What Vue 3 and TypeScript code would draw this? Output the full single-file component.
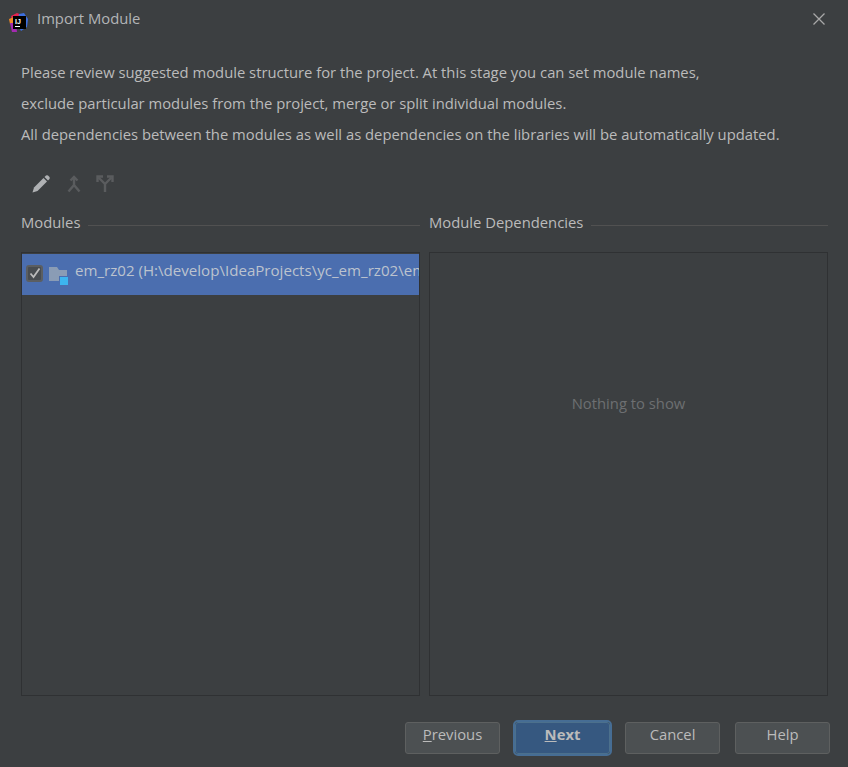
<script setup lang="ts">
const lines: string[] = [
  'Please review suggested module structure for the project. At this stage you can set module names,',
  'exclude particular modules from the project, merge or split individual modules.',
  'All dependencies between the modules as well as dependencies on the libraries will be automatically updated.',
]
</script>

<template>
  <div class="dialog">
    <header class="title">
      <svg class="logo" width="20" height="20" viewBox="0 0 20 20">
        <path d="M2 4 L8 1 L13 3 L10 7 L3 9 Z" fill="#e5234f" />
        <path d="M10 2 L15 1 L19 7 L18 15 L12 19 L8 12 Z" fill="#3d6fe0" />
        <path d="M0 7 L5 5 V13 L1 12 Z" fill="#f08a24" />
        <path d="M1 11 L7 11 L8 20 L3 20 Z" fill="#a32bb0" />
        <rect x="4" y="4" width="13" height="13" fill="#000" />
        <rect x="6" y="14" width="5" height="1" fill="#fff" />
        <text x="6" y="11.500" class="logo-text">IJ</text>
      </svg>
      <span class="title-text">Import Module</span>
      <svg class="close" width="16" height="16" viewBox="0 0 16 16">
        <path d="M2.500 2.500 L13.500 13.500 M13.500 2.500 L2.500 13.500" stroke="#a8a8a8" stroke-width="1.300" fill="none" />
      </svg>
    </header>

    <section class="intro">
      <p v-for="line in lines" :key="line">{{ line }}</p>
    </section>

    <div class="toolbar">
      <svg width="20" height="20" viewBox="0 0 20 20">
        <path d="M1.500 18.500 L3 13.500 L12.500 4 L16 7.500 L6.500 17 Z" fill="#afb1b3" />
        <path d="M13.500 3 L15 1.500 Q16 0.800 17 1.500 L18.500 3 Q19 4 18.500 5 L17 6.500 Z" fill="#afb1b3" />
      </svg>
      <svg width="20" height="20" viewBox="0 0 20 20" fill="none" stroke="#5a5c5e" stroke-width="2.400">
        <path d="M11 3 V11 L5.500 17.500 M11 11 L16.500 17.500" />
        <path d="M7.500 6.500 L11 3 L14.500 6.500" />
      </svg>
      <svg width="20" height="20" viewBox="0 0 20 20" fill="none" stroke="#5a5c5e" stroke-width="2.400">
        <path d="M10 18 V10 L3.500 3.500 M10 10 L16.500 3.500" />
        <path d="M2.500 8 V2.500 H8 M12 2.500 H17.500 V8" />
      </svg>
    </div>

    <div class="columns">
      <div class="column">
        <div class="legend"><span>Modules</span><i></i></div>
        <div class="panel">
          <div class="row">
            <span class="check">
              <svg width="12" height="12" viewBox="0 0 12 12" fill="none" stroke="#bbbbbb" stroke-width="1.800">
                <path d="M1.500 6.500 L4.500 10 L10.500 1.500" />
              </svg>
            </span>
            <svg class="folder" width="20" height="20" viewBox="0 0 20 20">
              <path d="M0 1 H8 L10 4 H18 V15 H0 Z" fill="#8a9cb5" />
              <rect x="10" y="10" width="10" height="10" fill="#4b6eaf" />
              <rect x="11" y="11" width="8" height="8" fill="#3db5ef" />
            </svg>
            <span class="row-text">em_rz02 (H:\develop\IdeaProjects\yc_em_rz02\em_rz02)</span>
          </div>
        </div>
      </div>
      <div class="column">
        <div class="legend"><span>Module Dependencies</span><i></i></div>
        <div class="panel empty">Nothing to show</div>
      </div>
    </div>

    <footer class="actions">
      <button type="button" class="btn"><u>P</u>revious</button>
      <button type="button" class="btn primary"><u>N</u>ext</button>
      <button type="button" class="btn">Cancel</button>
      <button type="button" class="btn">Help</button>
    </footer>
  </div>
</template>

<style>
html, body { margin: 0; background: #3c3f41; }
</style>

<style scoped>
.dialog {
  width: 848px;
  height: 767px;
  box-sizing: border-box;
  background: #3c3f41;
  color: #bbbbbb;
  font-family: "Open Sans", "Noto Sans", sans-serif;
  font-size: 14.800px;
  display: flex;
  flex-direction: column;
  overflow: hidden;
}
.title {
  height: 37px;
  display: flex;
  align-items: center;
  padding: 0 21px 0 9px;
  flex: none;
}
.logo { flex: none; margin-top: 7px; overflow: visible; }
.logo-text { font: bold 7px "Liberation Sans", sans-serif; fill: #fff; }
.title-text { margin: 0 0 2px 8px; color: #b3b5b7; }
.close { margin-left: auto; }
.intro { padding: 20px 21px 0; flex: none; }
.intro p { margin: 0; height: 31px; line-height: 31px; white-space: nowrap; }
.toolbar {
  margin-top: 21px;
  padding-left: 31px;
  display: flex;
  gap: 12px;
  align-items: center;
  height: 26px;
  flex: none;
}
.columns {
  margin-top: 13px;
  padding: 0 20px 0 21px;
  display: grid;
  grid-template-columns: 399px 399px;
  column-gap: 9px;
  flex: none;
}
.legend {
  height: 24px;
  display: flex;
  align-items: center;
  gap: 8px;
}
.legend i { flex: 1; height: 1px; background: #515151; margin-top: 6px; }
.panel {
  margin-top: 18px;
  height: 444px;
  box-sizing: border-box;
  border: 1px solid #2f3133;
  padding-top: 1px;
}
.row {
  height: 41px;
  background: #4b6eaf;
  display: flex;
  align-items: center;
  padding-left: 4px;
  overflow: hidden;
  white-space: nowrap;
}
.check {
  width: 17px;
  height: 17px;
  box-sizing: border-box;
  flex: none;
  border: 2px solid #5b5e61;
  border-radius: 3px;
  background: #484c50;
  display: flex;
  align-items: center;
  justify-content: center;
  margin-bottom: 3px;
}
.folder { margin: 3px 0 0 6px; flex: none; }
.row-text { margin: 0 0 9px 6px; color: #bcc3ce; font-size: 15.100px; }
.empty {
  display: flex;
  align-items: center;
  justify-content: center;
  color: #6d6f71;
  padding-bottom: 144px;
}
.actions {
  margin-top: 26px;
  padding-left: 405px;
  display: flex;
  gap: 15px;
  align-items: center;
  flex: none;
}
.btn {
  width: 95px;
  height: 32px;
  box-sizing: border-box;
  padding: 0 0 8px;
  border: 1px solid #5e6060;
  border-radius: 3px;
  background: #4c5052;
  color: #bbbbbb;
  font: inherit;
  outline: none;
}
.primary {
  background: #365880;
  border-color: #4c708c;
  font-weight: 700;
  outline: 2px solid #466d94;
  outline-offset: 0;
}
</style>
